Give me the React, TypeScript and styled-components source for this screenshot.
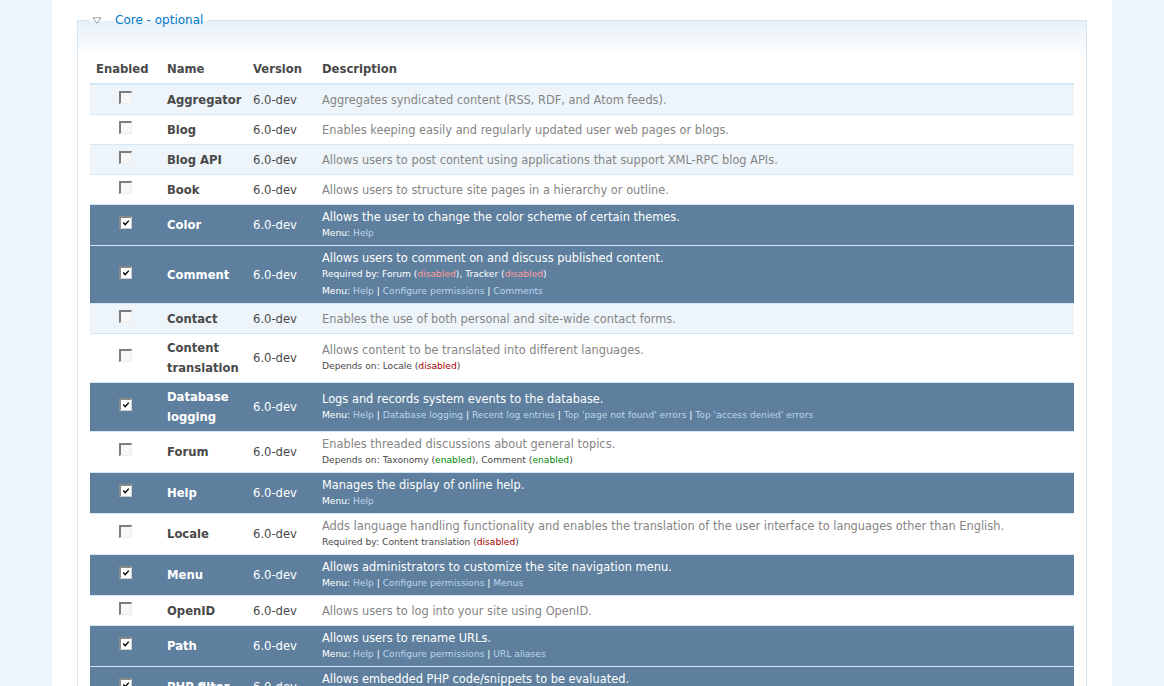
import React from "react";
import styled, { createGlobalStyle } from "styled-components";

const Global = createGlobalStyle`
  html, body { margin: 0; padding: 0; }
  body {
    background: #edf5fa;
    font-family: "DejaVu Sans", Verdana, sans-serif;
    color: #494949;
  }
`;

const Page = styled.div`
  margin: 0 52px;
  min-height: 100vh;
  background: #fff;
  padding: 12px 25px 0;
`;

const Fieldset = styled.fieldset`
  margin: 0;
  padding: 30px 12px 12px;
  border: 1px solid #d4e4f1;
  background: linear-gradient(to bottom, #e7f0f8 0px, #ffffff 36px);
`;

const Legend = styled.legend`
  padding: 0 4px 0 2px;
  font-size: 12px;
  line-height: 16px;
  color: #027ac6;
  display: flex;
  align-items: center;
`;

const Arrow = styled.svg`
  width: 10px;
  height: 7px;
  margin-right: 13px;
`;

const GRID = "71px 86px 69px 1fr";

const HeadRow = styled.div`
  display: grid;
  grid-template-columns: ${GRID};
  border-bottom: 2px solid #d3e7f4;
`;

const Th = styled.div`
  padding: 3px 6px 5px;
  font-size: 11.6px;
  line-height: 17px;
  font-weight: bold;
  color: #494949;
`;

const Row = styled.div<{ $odd: boolean; $sel: boolean }>`
  display: grid;
  grid-template-columns: ${GRID};
  align-items: center;
  min-height: 30px;
  box-sizing: border-box;
  border-bottom: 1px solid #d3e7f4;
  background: ${(p) => (p.$sel ? "#5e809e" : p.$odd ? "#edf5fa" : "#ffffff")};
  color: ${(p) => (p.$sel ? "#ffffff" : "#494949")};
`;

const Cell = styled.div`
  padding: 4px 6px;
  font-size: 11.6px;
  line-height: 20px;
`;

const CheckCell = styled(Cell)`
  display: flex;
  justify-content: center;
`;

const NameCell = styled(Cell)`
  font-weight: bold;
`;

const Box = styled.span<{ $on: boolean }>`
  display: block;
  width: 13px;
  height: 13px;
  box-sizing: border-box;
  margin-bottom: 5px;
  background: ${(p) => (p.$on ? "#ffffff" : "#f7f7f7")};
  border-top: 2px solid ${(p) => (p.$on ? "#8a8a8a" : "#7c7c7c")};
  border-left: 2px solid ${(p) => (p.$on ? "#8a8a8a" : "#7c7c7c")};
  border-right: 1px solid ${(p) => (p.$on ? "#cfcfcf" : "#ececec")};
  border-bottom: 1px solid ${(p) => (p.$on ? "#cfcfcf" : "#ececec")};
  svg { display: block; }
`;

const Desc = styled.div<{ $sel: boolean }>`
  font-size: 11.4px;
  line-height: 16px;
  color: ${(p) => (p.$sel ? "#ffffff" : "#858585")};
`;

const Small = styled.div<{ $sel: boolean; $gap?: boolean }>`
  font-size: 9.15px;
  line-height: 16px;
  margin-top: ${(p) => (p.$gap ? "1px" : "0")};
  color: ${(p) => (p.$sel ? "#ffffff" : "#494949")};
`;

const Link = styled.span<{ $sel: boolean }>`
  color: ${(p) => (p.$sel ? "#bcd4ec" : "#027ac6")};
`;

const Status = styled.span<{ $sel: boolean; $kind: "enabled" | "disabled" }>`
  color: ${(p) =>
    p.$kind === "enabled" ? "#008800" : p.$sel ? "#ff9c9c" : "#a30000"};
`;

type Dep = { name: string; status: "enabled" | "disabled" };
type Mod = {
  name: string;
  on: boolean;
  desc: string;
  required?: Dep[];
  depends?: Dep[];
  menu?: string[];
};

const modules: Mod[] = [
  { name: "Aggregator", on: false, desc: "Aggregates syndicated content (RSS, RDF, and Atom feeds)." },
  { name: "Blog", on: false, desc: "Enables keeping easily and regularly updated user web pages or blogs." },
  { name: "Blog API", on: false, desc: "Allows users to post content using applications that support XML-RPC blog APIs." },
  { name: "Book", on: false, desc: "Allows users to structure site pages in a hierarchy or outline." },
  { name: "Color", on: true, desc: "Allows the user to change the color scheme of certain themes.", menu: ["Help"] },
  {
    name: "Comment",
    on: true,
    desc: "Allows users to comment on and discuss published content.",
    required: [
      { name: "Forum", status: "disabled" },
      { name: "Tracker", status: "disabled" },
    ],
    menu: ["Help", "Configure permissions", "Comments"],
  },
  { name: "Contact", on: false, desc: "Enables the use of both personal and site-wide contact forms." },
  {
    name: "Content translation",
    on: false,
    desc: "Allows content to be translated into different languages.",
    depends: [{ name: "Locale", status: "disabled" }],
  },
  {
    name: "Database logging",
    on: true,
    desc: "Logs and records system events to the database.",
    menu: ["Help", "Database logging", "Recent log entries", "Top 'page not found' errors", "Top 'access denied' errors"],
  },
  {
    name: "Forum",
    on: false,
    desc: "Enables threaded discussions about general topics.",
    depends: [
      { name: "Taxonomy", status: "enabled" },
      { name: "Comment", status: "enabled" },
    ],
  },
  { name: "Help", on: true, desc: "Manages the display of online help.", menu: ["Help"] },
  {
    name: "Locale",
    on: false,
    desc: "Adds language handling functionality and enables the translation of the user interface to languages other than English.",
    required: [{ name: "Content translation", status: "disabled" }],
  },
  {
    name: "Menu",
    on: true,
    desc: "Allows administrators to customize the site navigation menu.",
    menu: ["Help", "Configure permissions", "Menus"],
  },
  { name: "OpenID", on: false, desc: "Allows users to log into your site using OpenID." },
  { name: "Path", on: true, desc: "Allows users to rename URLs.", menu: ["Help", "Configure permissions", "URL aliases"] },
  { name: "PHP filter", on: true, desc: "Allows embedded PHP code/snippets to be evaluated.", menu: ["Help"] },
];

const DepList: React.FC<{ label: string; deps: Dep[]; sel: boolean }> = ({ label, deps, sel }) => (
  <Small $sel={sel}>
    {label}{" "}
    {deps.map((d, i) => (
      <React.Fragment key={d.name}>
        {i > 0 && ", "}
        {d.name} (<Status $sel={sel} $kind={d.status}>{d.status}</Status>)
      </React.Fragment>
    ))}
  </Small>
);

export default function App() {
  return (
    <>
      <Global />
      <Page>
        <Fieldset>
          <Legend>
            <Arrow viewBox="0 0 10 7">
              <path d="M0.8 0.8 H9.2 L5 6.3 Z" fill="#fff" stroke="#9a9a9a" strokeWidth="1" />
            </Arrow>
            Core - optional
          </Legend>
          <HeadRow>
            <Th>Enabled</Th>
            <Th>Name</Th>
            <Th>Version</Th>
            <Th>Description</Th>
          </HeadRow>
          {modules.map((m, i) => {
            const sel = m.on;
            return (
              <Row key={m.name} $odd={i % 2 === 0} $sel={sel}>
                <CheckCell>
                  <Box $on={m.on}>
                    {m.on && (
                      <svg width="10" height="10" viewBox="0 0 10 10">
                        <path d="M2.3 4.6 L4.2 6.6 L7.8 2.6" fill="none" stroke="#000" strokeWidth="1.4" />
                      </svg>
                    )}
                  </Box>
                </CheckCell>
                <NameCell>{m.name}</NameCell>
                <Cell>6.0-dev</Cell>
                <Cell>
                  <Desc $sel={sel}>{m.desc}</Desc>
                  {m.required && <DepList label="Required by:" deps={m.required} sel={sel} />}
                  {m.depends && <DepList label="Depends on:" deps={m.depends} sel={sel} />}
                  {m.menu && (
                    <Small $sel={sel} $gap={!!m.required}>
                      Menu:{" "}
                      {m.menu.map((l, j) => (
                        <React.Fragment key={l}>
                          {j > 0 && " | "}
                          <Link $sel={sel}>{l}</Link>
                        </React.Fragment>
                      ))}
                    </Small>
                  )}
                </Cell>
              </Row>
            );
          })}
        </Fieldset>
      </Page>
    </>
  );
}
